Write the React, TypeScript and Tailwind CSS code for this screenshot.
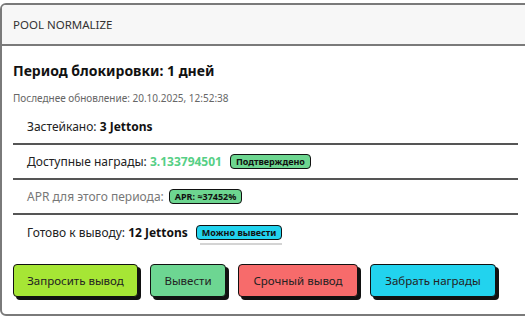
import React from 'react';

const font = { fontFamily: '"Noto Sans", "Open Sans", sans-serif' };

const Badge: React.FC<{ color: string; children: React.ReactNode; hint?: boolean; ml?: string }> = ({ color, children, hint, ml = 'ml-[8px]' }) => (
  <span
    className={`relative inline-flex items-center h-[15px] px-[5px] ${ml} rounded-[4px] border-[1.5px] border-[#111] text-[9px] font-bold text-[#111] leading-none ${color}`}
  >
    {children}
    {hint && <span className="absolute left-[3px] top-full mt-[4px] h-[2px] w-[82px] bg-[#d4d4d4]" />}
  </span>
);

const Row: React.FC<{ children: React.ReactNode; last?: boolean }> = ({ children, last }) => (
  <div
    className={`flex items-center h-[35px] pl-[14px] text-[12px] text-[#222] ${last ? '' : 'border-b-2 border-[#555]'}`}
  >
    {children}
  </div>
);

const Btn: React.FC<{ color: string; w: string; children: React.ReactNode }> = ({ color, w, children }) => (
  <button
    type="button"
    className={`h-[33px] ${w} rounded-[4px] border-[1.5px] border-[#111] shadow-[3px_3px_0_#111] text-[11.5px] text-[#222] ${color}`}
  >
    {children}
  </button>
);

export default function App() {
  return (
    <div className="w-[525px] h-[316px] overflow-hidden bg-white pt-[3px]" style={font}>
      <div className="w-[580px] rounded-[6px] border-2 border-[#7a7a7a] overflow-hidden">
        {/* Header */}
        <div className="h-[41px] flex items-center pl-[11px] bg-[#f7f7f7] border-b-2 border-[#7a7a7a] text-[11.5px] text-[#333]">
          POOL NORMALIZE
        </div>

        <div className="pl-[11px] pr-[60px] pt-[15px] pb-[17px]">
          <h2 className="text-[14px] font-bold text-[#111] leading-[20px]">Период блокировки: 1 дней</h2>
          <p className="mt-[10px] text-[10px] text-[#666] leading-[14px]">
            Последнее обновление: 20.10.2025, 12:52:38
          </p>

          <div className="mt-[5px]">
            <Row>
              Застейкано:&nbsp;<b className="text-[#111]">3 Jettons</b>
            </Row>
            <Row>
              Доступные награды:&nbsp;<b className="text-[#56cf85]">3.133794501</b>
              <Badge color="bg-[#6dd690]">Подтверждено</Badge>
            </Row>
            <Row>
              <span className="text-[#777]">APR для этого периода:</span>
              <Badge color="bg-[#6dd690]" ml="ml-[5px]">APR: ≈37452%</Badge>
            </Row>
            <Row last>
              Готово к выводу:&nbsp;<b className="text-[#111]">12 Jettons</b>
              <Badge color="bg-[#22d3ee]" hint>
                Можно вывести
              </Badge>
            </Row>
          </div>

          <div className="flex gap-[12px] mt-[14px]">
            <Btn color="bg-[#a6e635]" w="w-[125px]">Запросить вывод</Btn>
            <Btn color="bg-[#6dd692]" w="w-[76px]">Вывести</Btn>
            <Btn color="bg-[#f76b6b]" w="w-[120px]">Срочный вывод</Btn>
            <Btn color="bg-[#22d3ee]" w="w-[126px]">Забрать награды</Btn>
          </div>
        </div>
      </div>
    </div>
  );
}
